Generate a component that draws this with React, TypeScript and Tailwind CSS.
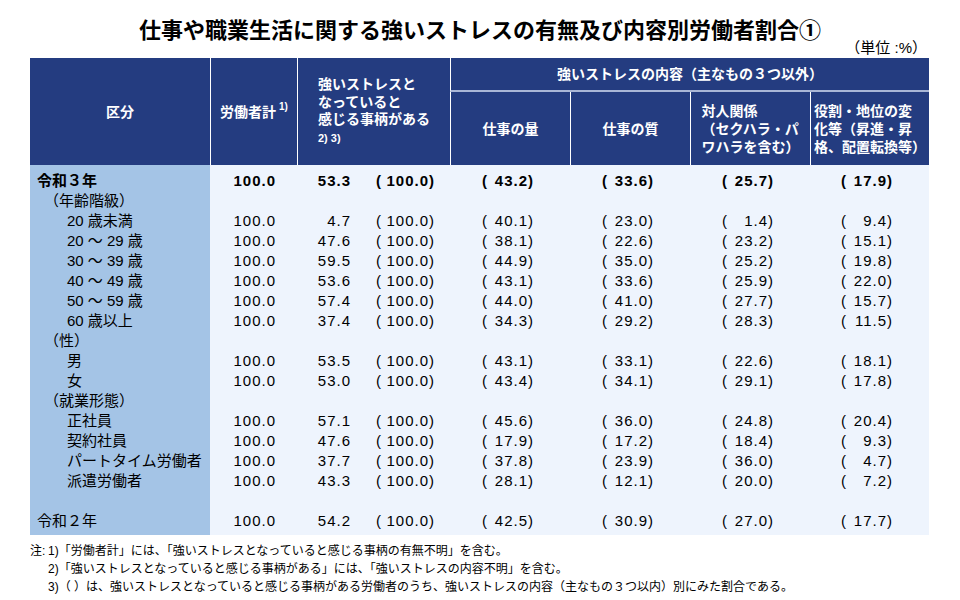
type Row = {
  label: string;
  level: 0 | 1 | 2;
  bold?: boolean;
  v?: [string, string, string, string, string, string];
};

const rows: Row[] = [
  { label: "令和３年", level: 0, bold: true, v: ["100.0", "53.3", "43.2", "33.6", "25.7", "17.9"] },
  { label: "（年齢階級）", level: 1 },
  { label: "20 歳未満", level: 2, v: ["100.0", "4.7", "40.1", "23.0", "1.4", "9.4"] },
  { label: "20 ～ 29 歳", level: 2, v: ["100.0", "47.6", "38.1", "22.6", "23.2", "15.1"] },
  { label: "30 ～ 39 歳", level: 2, v: ["100.0", "59.5", "44.9", "35.0", "25.2", "19.8"] },
  { label: "40 ～ 49 歳", level: 2, v: ["100.0", "53.6", "43.1", "33.6", "25.9", "22.0"] },
  { label: "50 ～ 59 歳", level: 2, v: ["100.0", "57.4", "44.0", "41.0", "27.7", "15.7"] },
  { label: "60 歳以上", level: 2, v: ["100.0", "37.4", "34.3", "29.2", "28.3", "11.5"] },
  { label: "（性）", level: 1 },
  { label: "男", level: 2, v: ["100.0", "53.5", "43.1", "33.1", "22.6", "18.1"] },
  { label: "女", level: 2, v: ["100.0", "53.0", "43.4", "34.1", "29.1", "17.8"] },
  { label: "（就業形態）", level: 1 },
  { label: "正社員", level: 2, v: ["100.0", "57.1", "45.6", "36.0", "24.8", "20.4"] },
  { label: "契約社員", level: 2, v: ["100.0", "47.6", "17.9", "17.2", "18.4", "9.3"] },
  { label: "パートタイム労働者", level: 2, v: ["100.0", "37.7", "37.8", "23.9", "36.0", "4.7"] },
  { label: "派遣労働者", level: 2, v: ["100.0", "43.3", "28.1", "12.1", "20.0", "7.2"] },
  { label: "", level: 0 },
  { label: "令和２年", level: 0, v: ["100.0", "54.2", "42.5", "30.9", "27.0", "17.7"] },
];

const indent = { 0: "pl-[7px]", 1: "pl-[14px]", 2: "pl-[37px]" };

const Paren = ({ n, wide }: { n: string; wide?: boolean }) => (
  <div className="flex items-center">
    <span>(</span>
    <span className={`${wide ? "w-[48px]" : "w-[41px]"} text-right tracking-[1px]`}>{n}</span>
    <span>)</span>
  </div>
);

const App = () => {
  return (
    <div className="w-[960px] h-[600px] bg-white text-black font-['Liberation_Sans','Noto_Sans_CJK_JP',sans-serif]">
      <div className="h-[58px] flex flex-col">
        <h1 className="pt-[19px] text-center text-[22px] font-bold leading-[24px]">
          仕事や職業生活に関する強いストレスの有無及び内容別労働者割合①
        </h1>
        <p className="mt-[-3px] pr-[33px] text-right text-[15px] leading-[16px]">（単位 :%）</p>
      </div>

      <div className="ml-[30px] w-[899px]">
        <div className="grid grid-cols-[180px_87px_153px_120px_120px_120px_119px] grid-rows-[34px_73px] bg-[#243c80] text-white text-[14px] font-bold leading-[18px]">
          <div className="row-span-2 flex items-center justify-center">区分</div>
          <div className="row-span-2 flex items-center justify-center border-l border-white">
            <span>労働者計</span>
            <span className="ml-[3px] mb-[10px] text-[10px] leading-[10px]">1)</span>
          </div>
          <div className="row-span-2 flex items-center justify-center border-l border-white">
            <div className="text-left leading-[17.5px]">
              強いストレスと
              <br />
              なっていると
              <br />
              感じる事柄がある
              <br />
              <span className="text-[11px]">2) 3)</span>
            </div>
          </div>
          <div className="col-span-4 flex items-center justify-center border-l border-white border-b-2 border-b-[#a9b6d6]">
            強いストレスの内容（主なもの３つ以外）
          </div>
          <div className="flex items-center justify-center border-l border-white">仕事の量</div>
          <div className="flex items-center justify-center border-l border-white">仕事の質</div>
          <div className="flex items-center justify-center border-l border-white">
            <div className="text-left">
              対人関係
              <br />
              （セクハラ・パ
              <br />
              ワハラを含む）
            </div>
          </div>
          <div className="flex items-center justify-center border-l border-white">
            <div className="text-left">
              役割・地位の変
              <br />
              化等（昇進・昇
              <br />
              格、配置転換等）
            </div>
          </div>
        </div>

        <div className="flex text-[15px] leading-[20px]">
          <div className="w-[180px] bg-[#a4c4e6] pt-[6px] pb-[4px]">
            {rows.map((r, i) => (
              <div key={i} className={`h-[20px] ${indent[r.level]} ${r.bold ? "font-bold" : ""}`}>
                {r.label}
              </div>
            ))}
          </div>
          <div className="flex-1 bg-[#eef4fd] pt-[6px] pb-[4px]">
            {rows.map((r, i) => (
              <div
                key={i}
                className={`h-[20px] grid grid-cols-[87px_153px_120px_120px_120px_119px] ${r.bold ? "font-bold" : ""}`}
              >
                {r.v && (
                  <>
                    <div className="pr-[21px] text-right tracking-[1px]">{r.v[0]}</div>
                    <div className="flex">
                      <span className="w-[54px] text-right tracking-[1px]">{r.v[1]}</span>
                      <div className="ml-[25px]">
                        <Paren n="100.0" wide />
                      </div>
                    </div>
                    {r.v.slice(2).map((n, j) => (
                      <div key={j} className="flex justify-end pr-[37px]">
                        <Paren n={n} />
                      </div>
                    ))}
                  </>
                )}
              </div>
            ))}
          </div>
        </div>
      </div>

      <div className="mt-[7px] ml-[30px] text-[12px] leading-[18px]">
        <p>
          <span className="inline-block w-[18px]">注:</span>1)「労働者計」には、「強いストレスとなっていると感じる事柄の有無不明」を含む。
        </p>
        <p className="pl-[18px]">2)「強いストレスとなっていると感じる事柄がある」には、「強いストレスの内容不明」を含む。</p>
        <p className="pl-[18px]">
          3)（ ）は、強いストレスとなっていると感じる事柄がある労働者のうち、強いストレスの内容（主なもの３つ以内）別にみた割合である。
        </p>
      </div>
    </div>
  );
};

export default App;
